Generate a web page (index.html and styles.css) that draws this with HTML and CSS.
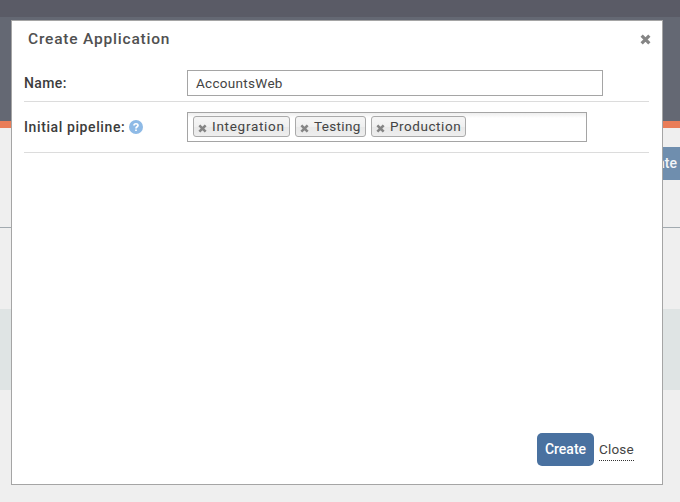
FILE: index.html
```html
<!DOCTYPE html>
<html lang="en">
<head>
<meta charset="utf-8">
<title>Create Application</title>
<link rel="stylesheet" href="styles.css">
</head>
<body>
<div class="page">
  <div class="topbar"></div>
  <div class="header"></div>
  <div class="toolbar"><span class="page-create">Create</span></div>
  <div class="row-space"></div>
  <div class="band"></div>
</div>
<section class="dialog">
  <header class="dialog-head">
    <h1 class="title">Create Application</h1>
    <svg class="close-x" viewBox="0 0 10 10"><path d="M1.5 1.5 8.5 8.5M8.5 1.5 1.5 8.5"/></svg>
  </header>
  <div class="field name-field">
    <label class="label name-label">Name:</label>
    <div class="input">AccountsWeb</div>
  </div>
  <div class="field pipeline-field">
    <label class="label pipe-label">Initial pipeline:</label>
    <svg class="help" viewBox="0 0 14 14"><circle cx="7" cy="7" r="7"/><path d="M5 5.4C5 3.2 9 3.2 9 5.4 9 6.8 7 6.7 7 8.4M7 9.6V11"/></svg>
    <div class="select">
      <span class="tag tag-int"><svg class="tag-x" viewBox="0 0 10 10"><path d="M1.5 1.5 8.5 8.5M8.5 1.5 1.5 8.5"/></svg><span>Integration</span></span>
      <span class="tag tag-test"><svg class="tag-x" viewBox="0 0 10 10"><path d="M1.5 1.5 8.5 8.5M8.5 1.5 1.5 8.5"/></svg><span>Testing</span></span>
      <span class="tag tag-prod"><svg class="tag-x" viewBox="0 0 10 10"><path d="M1.5 1.5 8.5 8.5M8.5 1.5 1.5 8.5"/></svg><span>Production</span></span>
    </div>
  </div>
  <footer class="actions">
    <button class="create">Create</button>
    <a class="close">Close</a>
  </footer>
</section>
</body>
</html>
```
FILE: styles.css
```css
* { box-sizing: border-box; }
body {
  margin: 0;
  height: 502px;
  overflow: hidden;
  position: relative;
  background: #efefef;
  color: #444;
  font: 13.5px/18px Roboto, "Liberation Sans", sans-serif;
}
.topbar { height: 17px; background: #5a5b66; }
.header { height: 111px; background: #646873; border-bottom: 7px solid #e97d58; }
.toolbar {
  height: 100px;
  padding-top: 19px;
  border-bottom: 1px solid #a2aab0;
  display: flex;
  justify-content: flex-end;
  align-items: flex-start;
}
.page-create {
  height: 33px;
  padding: 0 3px 0 12px;
  background: #6f8eae;
  color: #f2f5f8;
  font-size: 14px;
  font-weight: 500;
  line-height: 33px;
}
.row-space { height: 81px; }
.band { height: 81px; background: #dfe4e4; }

.dialog {
  position: absolute;
  left: 11px;
  top: 20px;
  width: 652px;
  height: 465px;
  padding: 0 13px 0 12px;
  background: #fff;
  border: 1px solid #a5a5a5;
  display: flex;
  flex-direction: column;
}
.dialog-head {
  height: 41px;
  display: flex;
  justify-content: space-between;
  padding: 9px 0 0 4px;
}
.title { margin: 0; font-size: 15.5px; line-height: 19px; font-weight: 500; color: #505050; letter-spacing: .8px; }
.close-x { width: 11px; height: 11px; margin: 4px -2px 0 0; }
.close-x path, .tag-x path { fill: none; stroke: #858585; stroke-width: 2.9; }
.field { display: flex; border-bottom: 1px solid #dcdcdc; }
.name-field { height: 40px; padding-top: 8px; }
.pipeline-field { height: 51px; padding-top: 10px; }
.label { font-weight: 500; font-size: 14px; color: #3c3c3c; }
.name-label { width: 163px; margin-top: 4px; letter-spacing: .4px; }
.pipe-label { width: 105px; margin-top: 6px; letter-spacing: .6px; white-space: nowrap; }
.help { width: 14px; height: 14px; margin: 8px 44px 0 0; }
.help circle { fill: #8ebae6; }
.help path { fill: none; stroke: #fff; stroke-width: 1.7; }
.input { width: 416px; height: 26px; border: 1px solid #a5a5a5; padding: 3px 0 0 8px; letter-spacing: .3px; }
.select {
  width: 400px;
  height: 30px;
  border: 1px solid #a5a5a5;
  padding: 3px 5px;
  display: flex;
  gap: 5px;
  background: linear-gradient(#eee, #fff 5px);
}
.tag {
  height: 21px;
  display: flex;
  align-items: flex-start;
  padding-left: 4px;
  border: 1px solid #aaa;
  border-radius: 3px;
  background: linear-gradient(#f4f4f4 20%, #f0f0f0 50%, #e8e8e8 52%, #eee);
  white-space: nowrap;
}
.tag-x { width: 9px; height: 9px; margin: 7px 5px 0 0; flex: none; }
.tag-int { width: 97px; letter-spacing: .72px; }
.tag-test { width: 71px; letter-spacing: .35px; }
.tag-prod { width: 95px; letter-spacing: .55px; }
.actions { margin-top: auto; height: 51px; display: flex; padding-left: 513px; }
.create {
  width: 57px;
  height: 33px;
  padding: 0;
  border: 0;
  border-radius: 5px;
  background: #4971a0;
  color: #fff;
  font: 500 14px/33px Roboto, "Liberation Sans", sans-serif;
}
.close { height: 20px; margin: 8px 0 0 5px; border-bottom: 1px dotted #333; line-height: 17px; letter-spacing: .2px; }
```
